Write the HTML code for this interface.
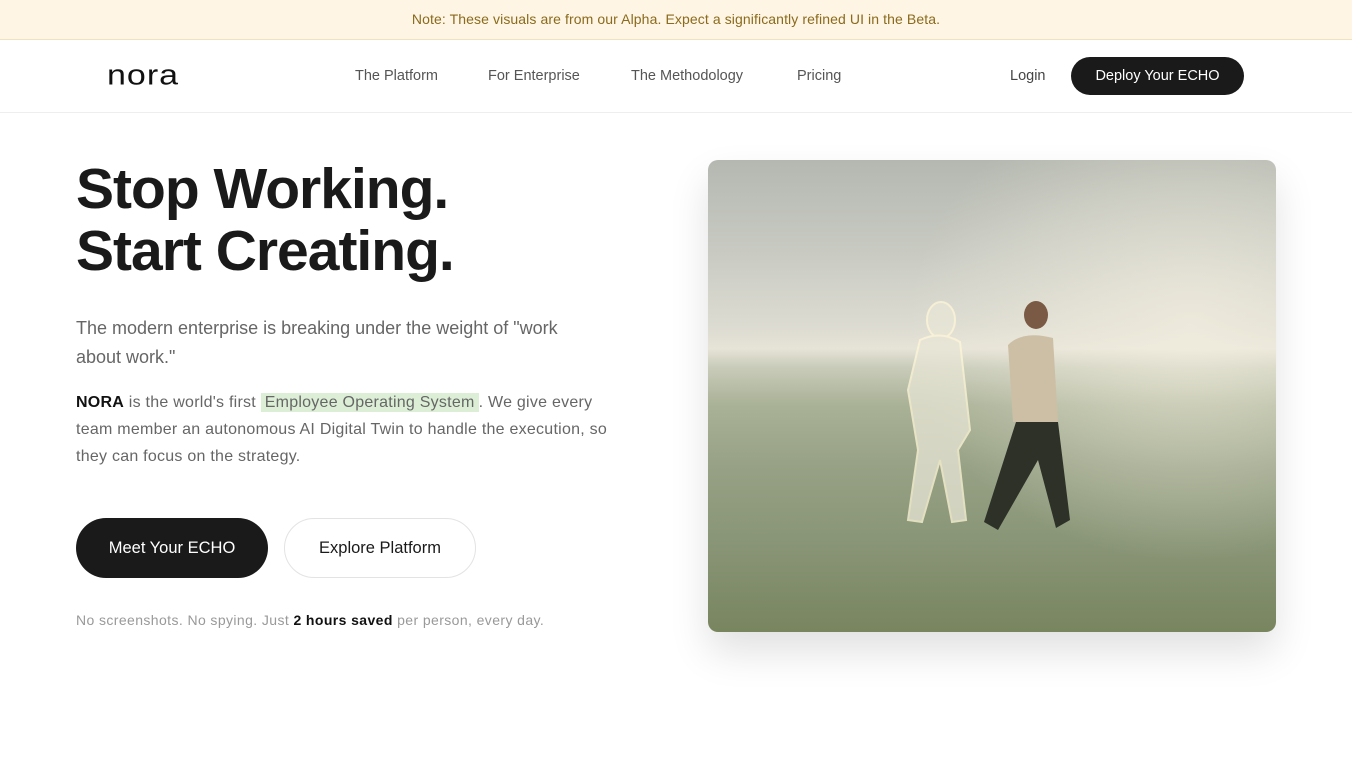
<!DOCTYPE html>
<html><head><meta charset="utf-8"><style>
*{margin:0;padding:0;box-sizing:border-box}
body{width:1352px;height:760px;overflow:hidden;background:#fff;font-family:"Liberation Sans",sans-serif;position:relative}
.bar{height:40px;background:#fef5e4;border-bottom:1px solid #f0e2bf;text-align:center;font-size:14px;line-height:39px;color:#8a6a1c;letter-spacing:.1px}
nav{height:73px;border-bottom:1px solid #eee;position:relative}
.logo{position:absolute;left:107px;top:16px;font-size:34px;letter-spacing:1px;color:#111;font-weight:400;transform:scaleY(0.85);transform-origin:left center}
.links a{position:absolute;top:28px;font-size:14.5px;color:#555;text-decoration:none}
.login{position:absolute;left:1010px;top:28px;font-size:14.5px;color:#444}
.dep{position:absolute;left:1071px;top:17px;width:173px;height:38px;border-radius:19px;background:#1a1a1a;color:#fff;font-size:14.5px;text-align:center;line-height:38px}
h1{position:absolute;left:76px;top:158px;font-size:57px;line-height:62px;font-weight:700;color:#1a1a1a;letter-spacing:-1px}
.p1{position:absolute;left:76px;top:314px;width:522px;font-size:18px;line-height:29px;color:#666}
.p2{position:absolute;left:76px;top:389px;width:555px;font-size:16px;line-height:27px;color:#666;letter-spacing:.25px}
.p2 b{color:#111}
.hl{background:#dcefd6;padding:1px 4px}
.b1{position:absolute;left:76px;top:518px;width:192px;height:60px;border-radius:30px;background:#1a1a1a;color:#fff;font-size:16.5px;text-align:center;line-height:60px}
.b2{position:absolute;left:284px;top:518px;width:192px;height:60px;border-radius:30px;border:1px solid #e3e3e3;color:#1a1a1a;font-size:16.5px;text-align:center;line-height:58px}
.note{position:absolute;left:76px;top:612px;font-size:14px;color:#999;letter-spacing:.4px}
.note b{color:#111}
.img{position:absolute;left:708px;top:160px;width:568px;height:472px;border-radius:10px;overflow:hidden;box-shadow:0 20px 40px rgba(0,0,0,.12);
background:linear-gradient(180deg,#b4b8b0 0%,#c9cbc3 20%,#dcdbd1 35%,#e6e3d7 40%,#c8cbb9 44%,#a9b196 52%,#97a185 65%,#8a9678 80%,#78855f 100%)}
</style></head><body>
<div class="bar">Note: These visuals are from our Alpha. Expect a significantly refined UI in the Beta.</div>
<nav>
<div class="logo">nora</div>
<div class="links"><a style="left:355px">The Platform</a><a style="left:488px">For Enterprise</a><a style="left:631px">The Methodology</a><a style="left:797px">Pricing</a></div>
<div class="login">Login</div>
<div class="dep">Deploy Your ECHO</div>
</nav>
<h1>Stop Working.<br>Start Creating.</h1>
<div class="p1">The modern enterprise is breaking under the weight of "work about work."</div>
<div class="p2"><b>NORA</b> is the world's first <span class="hl">Employee Operating System</span>. We give every team member an autonomous AI Digital Twin to handle the execution, so they can focus on the strategy.</div>
<div class="b1">Meet Your ECHO</div>
<div class="b2">Explore Platform</div>
<div class="note">No screenshots. No spying. Just <b>2 hours saved</b> per person, every day.</div>
<div class="img">
<svg width="568" height="472" viewBox="0 0 568 472">
<radialGradient id="g" cx="0.85" cy="0.35" r="0.5"><stop offset="0" stop-color="#f4efe0" stop-opacity=".7"/><stop offset="1" stop-color="#f4efe0" stop-opacity="0"/></radialGradient>
<rect width="568" height="472" fill="url(#g)"/>
<g fill="#e8e6d6" opacity=".75" stroke="#fff7d8" stroke-width="2">
<ellipse cx="233" cy="160" rx="14" ry="18"/>
<path d="M212 180 Q233 170 252 182 L262 270 L250 290 L258 360 L244 362 L232 300 L214 362 L200 360 L210 290 L200 230 Z"/>
</g>
<g>
<ellipse cx="328" cy="155" rx="12" ry="14" fill="#7a5a45"/>
<path d="M300 185 Q315 170 345 178 L350 262 L305 262 Z" fill="#cdbfa6"/>
<path d="M308 262 L350 262 L362 360 L348 368 L330 300 L290 370 L276 362 Z" fill="#2e3128"/>
</g>
</svg>
</div>
</body></html>
